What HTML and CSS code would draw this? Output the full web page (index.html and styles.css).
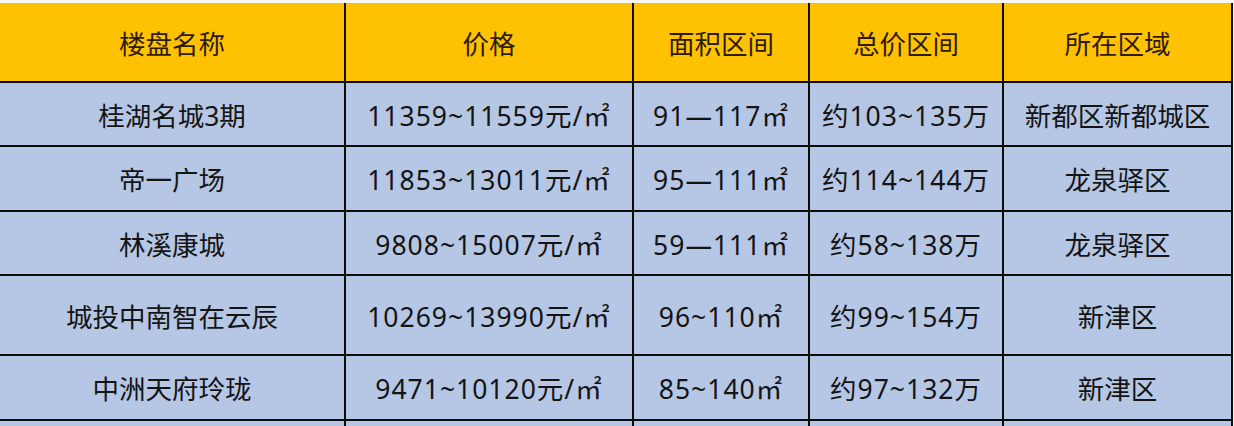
FILE: index.html
```html
<!DOCTYPE html>
<html lang="zh">
<head>
<meta charset="utf-8">
<title>楼盘价格表</title>
<link rel="stylesheet" href="styles.css">
</head>
<body>
<div class="page">
<table class="sheet">
  <colgroup>
    <col class="c1"><col class="c2"><col class="c3"><col class="c4"><col class="c5">
  </colgroup>
  <thead>
    <tr class="head">
      <th>楼盘名称</th><th>价格</th><th>面积区间</th><th>总价区间</th><th>所在区域</th>
    </tr>
  </thead>
  <tbody>
    <tr class="r64">
      <td>桂湖名城3期</td><td class="num">11359~11559元/㎡</td><td class="num">91—117㎡</td><td class="num">约103~135万</td><td>新都区新都城区</td>
    </tr>
    <tr class="r65">
      <td>帝一广场</td><td class="num">11853~13011元/㎡</td><td class="num">95—111㎡</td><td class="num">约114~144万</td><td>龙泉驿区</td>
    </tr>
    <tr class="r64">
      <td>林溪康城</td><td class="num">9808~15007元/㎡</td><td class="num">59—111㎡</td><td class="num">约58~138万</td><td>龙泉驿区</td>
    </tr>
    <tr class="r80">
      <td>城投中南智在云辰</td><td class="num">10269~13990元/㎡</td><td class="num">96~110㎡</td><td class="num">约99~154万</td><td>新津区</td>
    </tr>
    <tr class="r65">
      <td>中洲天府玲珑</td><td class="num">9471~10120元/㎡</td><td class="num">85~140㎡</td><td class="num">约97~132万</td><td>新津区</td>
    </tr>
    <tr class="r65">
      <td></td><td></td><td></td><td></td><td></td>
    </tr>
  </tbody>
</table>
</div>
</body>
</html>
```

FILE: styles.css
```css
html, body {
  margin: 0;
  padding: 0;
  background: #f7f7f3;
}
body {
  height: 426px;
  overflow: hidden;
}
.page {
  padding-top: 3px;
}
.sheet {
  width: 1233px;
  table-layout: fixed;
  border-collapse: separate;
  border-spacing: 0;
  font-family: "Noto Sans", "Noto Sans CJK SC", sans-serif;
  font-size: 26.5px;
  color: #141414;
}
.c1 { width: 346px; }
.c2 { width: 288px; }
.c3 { width: 176px; }
.c4 { width: 194px; }
.c5 { width: 229px; }
.sheet th,
.sheet td {
  box-sizing: border-box;
  padding: 0;
  text-align: center;
  vertical-align: middle;
  border-right: 2px solid #0c0c0c;
  border-bottom: 2px solid #0c0c0c;
  white-space: nowrap;
  overflow: hidden;
}
.sheet th {
  background: #ffc202;
  color: #2e1c05;
  font-weight: normal;
  height: 80px;
}
.sheet td {
  background: #b6c7e6;
}
.sheet td.num {
  letter-spacing: 1px;
}
.r64 td { height: 64px; }
.r65 td { height: 65px; }
.r80 td { height: 80px; }
```
